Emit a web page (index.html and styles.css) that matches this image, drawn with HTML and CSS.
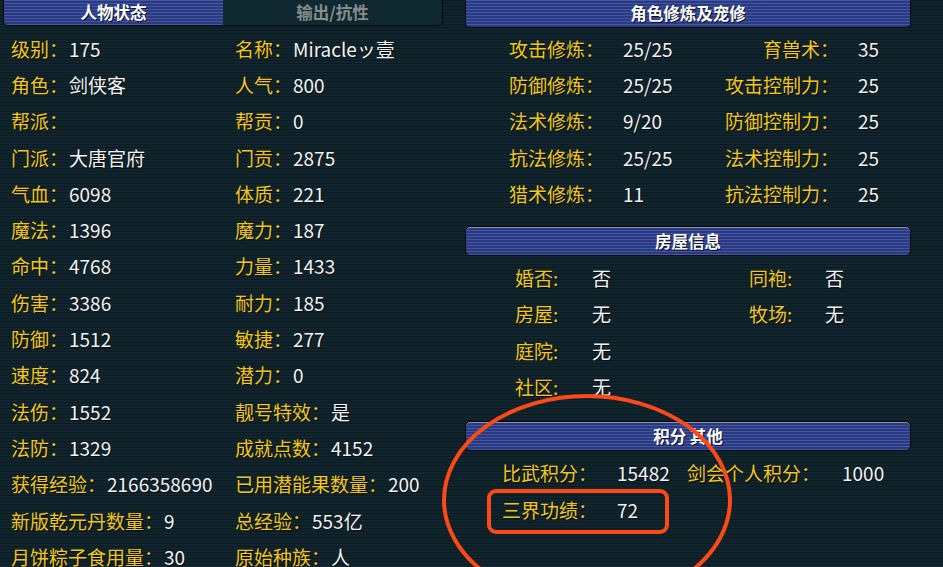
FILE: index.html
```html
<!DOCTYPE html>
<html lang="zh-CN">
<head>
    <meta charset="UTF-8">
    <meta name="viewport" content="width=device-width, initial-scale=1.0">
    <title>人物状态</title>
    <link rel="stylesheet" href="styles.css">
</head>
<body>
    <div class="page">
        <div class="left">
            <div class="tabs">
                <div class="tab active">人物状态</div>
                <div class="tab">输出/抗性</div>
            </div>
            <div class="stats">
                <div class="item"><span class="k">级别：</span><span class="v">175</span></div>
                <div class="item"><span class="k">名称：</span><span class="v">Miracleッ壹</span></div>
                <div class="item"><span class="k">角色：</span><span class="v">剑侠客</span></div>
                <div class="item"><span class="k">人气：</span><span class="v">800</span></div>
                <div class="item"><span class="k">帮派：</span><span class="v"></span></div>
                <div class="item"><span class="k">帮贡：</span><span class="v">0</span></div>
                <div class="item"><span class="k">门派：</span><span class="v">大唐官府</span></div>
                <div class="item"><span class="k">门贡：</span><span class="v">2875</span></div>
                <div class="item"><span class="k">气血：</span><span class="v">6098</span></div>
                <div class="item"><span class="k">体质：</span><span class="v">221</span></div>
                <div class="item"><span class="k">魔法：</span><span class="v">1396</span></div>
                <div class="item"><span class="k">魔力：</span><span class="v">187</span></div>
                <div class="item"><span class="k">命中：</span><span class="v">4768</span></div>
                <div class="item"><span class="k">力量：</span><span class="v">1433</span></div>
                <div class="item"><span class="k">伤害：</span><span class="v">3386</span></div>
                <div class="item"><span class="k">耐力：</span><span class="v">185</span></div>
                <div class="item"><span class="k">防御：</span><span class="v">1512</span></div>
                <div class="item"><span class="k">敏捷：</span><span class="v">277</span></div>
                <div class="item"><span class="k">速度：</span><span class="v">824</span></div>
                <div class="item"><span class="k">潜力：</span><span class="v">0</span></div>
                <div class="item"><span class="k">法伤：</span><span class="v">1552</span></div>
                <div class="item"><span class="k">靓号特效：</span><span class="v">是</span></div>
                <div class="item"><span class="k">法防：</span><span class="v">1329</span></div>
                <div class="item"><span class="k">成就点数：</span><span class="v">4152</span></div>
                <div class="item"><span class="k">获得经验：</span><span class="v">2166358690</span></div>
                <div class="item"><span class="k">已用潜能果数量：</span><span class="v">200</span></div>
                <div class="item"><span class="k">新版乾元丹数量：</span><span class="v">9</span></div>
                <div class="item"><span class="k">总经验：</span><span class="v">553亿</span></div>
                <div class="item"><span class="k">月饼粽子食用量：</span><span class="v">30</span></div>
                <div class="item"><span class="k">原始种族：</span><span class="v">人</span></div>
            </div>
        </div>

        <div class="right">
            <div class="bar top">角色修炼及宠修</div>
            <div class="grid train">
                <span class="k">攻击修炼：</span><span class="v">25/25</span><span class="k r">育兽术：</span><span class="v v2">35</span>
                <span class="k">防御修炼：</span><span class="v">25/25</span><span class="k r">攻击控制力：</span><span class="v v2">25</span>
                <span class="k">法术修炼：</span><span class="v">9/20</span><span class="k r">防御控制力：</span><span class="v v2">25</span>
                <span class="k">抗法修炼：</span><span class="v">25/25</span><span class="k r">法术控制力：</span><span class="v v2">25</span>
                <span class="k">猎术修炼：</span><span class="v">11</span><span class="k r">抗法控制力：</span><span class="v v2">25</span>
            </div>

            <div class="bar">房屋信息</div>
            <div class="grid house">
                <span class="k">婚否:</span><span class="v">否</span><span class="k">同袍:</span><span class="v">否</span>
                <span class="k">房屋:</span><span class="v">无</span><span class="k">牧场:</span><span class="v">无</span>
                <span class="k">庭院:</span><span class="v">无</span><span></span><span></span>
                <span class="k">社区:</span><span class="v">无</span><span></span><span></span>
            </div>

            <div class="bar">积分 其他</div>
            <div class="grid score">
                <span class="k">比武积分：</span><span class="v">15482</span><span class="k">剑会个人积分：</span><span class="v">1000</span>
                <span class="k">三界功绩：</span><span class="v">72</span><span></span><span></span>
            </div>
        </div>

        <!-- 截图上的红色标注 -->
        <svg class="mark" width="943" height="567" viewBox="0 0 943 567">
            <ellipse cx="587" cy="500" rx="143" ry="104" fill="none" stroke="#ff4a17" stroke-width="4"/>
            <rect x="489" y="491" width="178" height="41" rx="7" fill="none" stroke="#ff4a17" stroke-width="4"/>
        </svg>
    </div>
</body>
</html>
```

FILE: styles.css
```css
html, body {
    margin: 0;
    padding: 0;
}
body {
    width: 943px;
    height: 567px;
    overflow: hidden;
    background-color: #10252e;
    background-image: repeating-linear-gradient(to bottom, rgba(0, 0, 0, 0.28) 0, rgba(0, 0, 0, 0.28) 1px, transparent 1px, transparent 3px);
    font-family: "Noto Sans CJK SC", "Noto Sans", sans-serif;
    font-size: 19px;
}
.page {
    position: relative;
    display: flex;
    gap: 22px;
    padding-left: 3px;
    height: 567px;
}
.left {
    width: 440px;
}
.right {
    width: 446px;
    display: flex;
    flex-direction: column;
}

/* 标题条 */
.tabs {
    display: flex;
    height: 25px;
    border: 1px solid #05090c;
    border-top: none;
    border-radius: 0 0 5px 5px;
    overflow: hidden;
    background-color: #10282f;
}
.tab {
    flex: 1;
    display: flex;
    justify-content: center;
    align-items: center;
    font-size: 16.5px;
    font-weight: bold;
    color: #878c8c;
    padding-bottom: 2px;
}
.tab.active,
.bar {
    color: #fff;
    background-color: #2a3a80;
    background-image: repeating-linear-gradient(to bottom, rgba(120, 140, 220, 0.35) 0, rgba(120, 140, 220, 0.35) 1px, transparent 1px, transparent 3px);
    text-shadow: 1px 1px 0 #0a0f2a;
}
.bar {
    height: 28px;
    display: flex;
    justify-content: center;
    align-items: center;
    font-size: 16.5px;
    font-weight: bold;
    border: 1px solid #05090c;
    box-shadow: inset 0 1px 0 #8a93a8;
    border-radius: 5px;
    margin-top: 15px;
}
.bar.top {
    height: 25px;
    margin-top: 0;
    border-top: none;
    box-shadow: none;
    border-radius: 0 0 5px 5px;
    padding-bottom: 2px;
}

/* 数据 */
.k {
    color: #f2c71c;
    white-space: nowrap;
}
.v {
    color: #f2f2f2;
    white-space: nowrap;
}
.k, .v {
    text-shadow: 1px 1px 0 rgba(0, 0, 0, 0.55);
}
.stats {
    display: grid;
    grid-template-columns: 224px auto;
    grid-auto-rows: 36.3px;
    padding: 4px 0 0 8px;
}
.item {
    display: flex;
    align-items: center;
}
.item .v {
    margin-left: 1px;
}
.grid {
    display: grid;
    grid-auto-rows: 36.3px;
    align-items: center;
}
.train {
    grid-template-columns: 114px 101px 115px auto;
    padding: 2px 0 0 44px;
}
.train .r {
    text-align: right;
}
.train .v2 {
    padding-left: 19px;
}
.house {
    grid-template-columns: 77px 157px 76px auto;
    padding: 3px 0 0 50px;
}
.house + .bar {
    margin-top: 16px;
}
.score {
    grid-template-columns: 115px 70px 155px auto;
    padding: 4px 0 0 37px;
}

.mark {
    position: absolute;
    left: 0;
    top: 0;
    pointer-events: none;
}
```
